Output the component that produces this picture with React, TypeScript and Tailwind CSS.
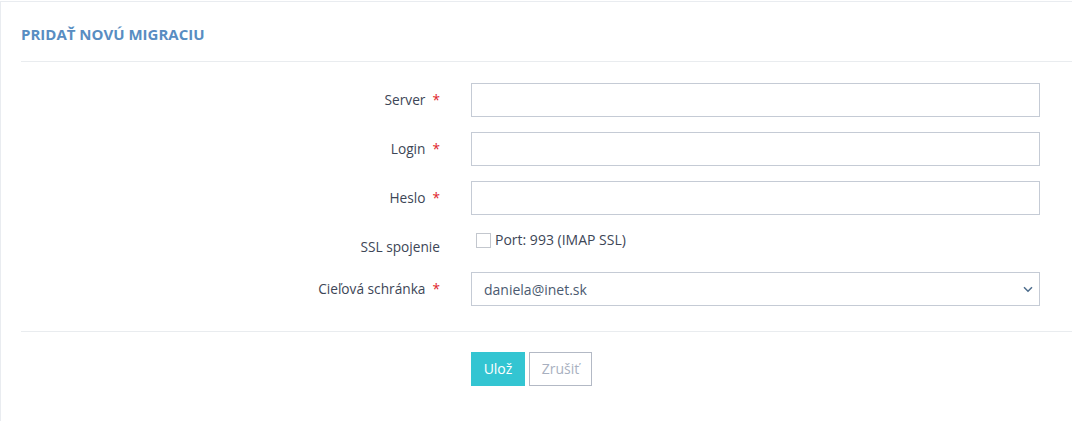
import React from "react";

const Req = () => <span className="ml-[7px] text-[#e0242b]">*</span>;

function Row({ label, required, children }: { label: string; required?: boolean; children: React.ReactNode }) {
  return (
    <div className="flex mb-[15px]">
      <div className="w-[429px] shrink-0 pt-[7px] pr-[10px] text-right text-[13.7px] leading-[20px] text-[#3d4656]">
        {label}
        {required && <Req />}
      </div>
      <div className="w-[569px] shrink-0 ml-[21px]">{children}</div>
    </div>
  );
}

export default function App() {
  return (
    <div className="w-[1072px] h-[421px] bg-white overflow-hidden" style={{ fontFamily: '"Open Sans", sans-serif' }}>
      <div className="mt-px h-[430px] w-[1100px] border-l border-t border-[#e9ecf0] pl-[20px]">
        <div className="h-[60px] border-b border-[#e9ecef] flex items-center pt-[5px]">
          <h2 className="text-[15px] font-bold uppercase text-[#588dc2] leading-[20px]">Pridať novú migraciu</h2>
        </div>
        <div className="pt-[21px]">
          <Row label="Server" required>
            <input className="block w-full h-[34px] border border-[#c5cbd5] bg-white outline-none" />
          </Row>
          <Row label="Login" required>
            <input className="block w-full h-[34px] border border-[#c5cbd5] bg-white outline-none" />
          </Row>
          <Row label="Heslo" required>
            <input type="password" className="block w-full h-[34px] border border-[#c5cbd5] bg-white outline-none" />
          </Row>
          <div className="flex mb-[15px] h-[27px]">
            <div className="w-[429px] shrink-0 pt-[7px] pr-[10px] text-right text-[13.7px] leading-[20px] text-[#3d4656]">
              SSL spojenie
            </div>
            <div className="ml-[21px] flex items-start pt-[3px] pl-[5px]">
              <span className="block w-[15px] h-[15px] border border-[#c3c7ce] bg-white" />
              <span className="ml-[4px] text-[14px] leading-[16px] text-[#3d4656] -mt-[1px]">Port: 993 (IMAP SSL)</span>
            </div>
          </div>
          <Row label="Cieľová schránka" required>
            <div className="relative w-full h-[34px] border border-[#c5cbd5] bg-white flex items-center pl-[12px] text-[14px] text-[#4b5a70]">
              daniela@inet.sk
              <svg className="absolute right-[6px] top-[13px]" width="10" height="7" viewBox="0 0 10 7" fill="none">
                <path d="M1 1.2l4 4 4-4" stroke="#4c6c8c" strokeWidth="1.5" />
              </svg>
            </div>
          </Row>
        </div>
        <div className="mt-[25px] border-t border-[#e9ecef] pt-[20px] flex pl-[450px]">
          <button className="h-[34px] w-[54px] bg-[#33c5d2] text-white text-[14px] leading-[20px]">Ulož</button>
          <button className="ml-[4px] h-[34px] w-[63px] border border-[#b3b9c5] text-[#a8b0c0] text-[14px] leading-[20px] bg-white">Zrušiť</button>
        </div>
      </div>
    </div>
  );
}
